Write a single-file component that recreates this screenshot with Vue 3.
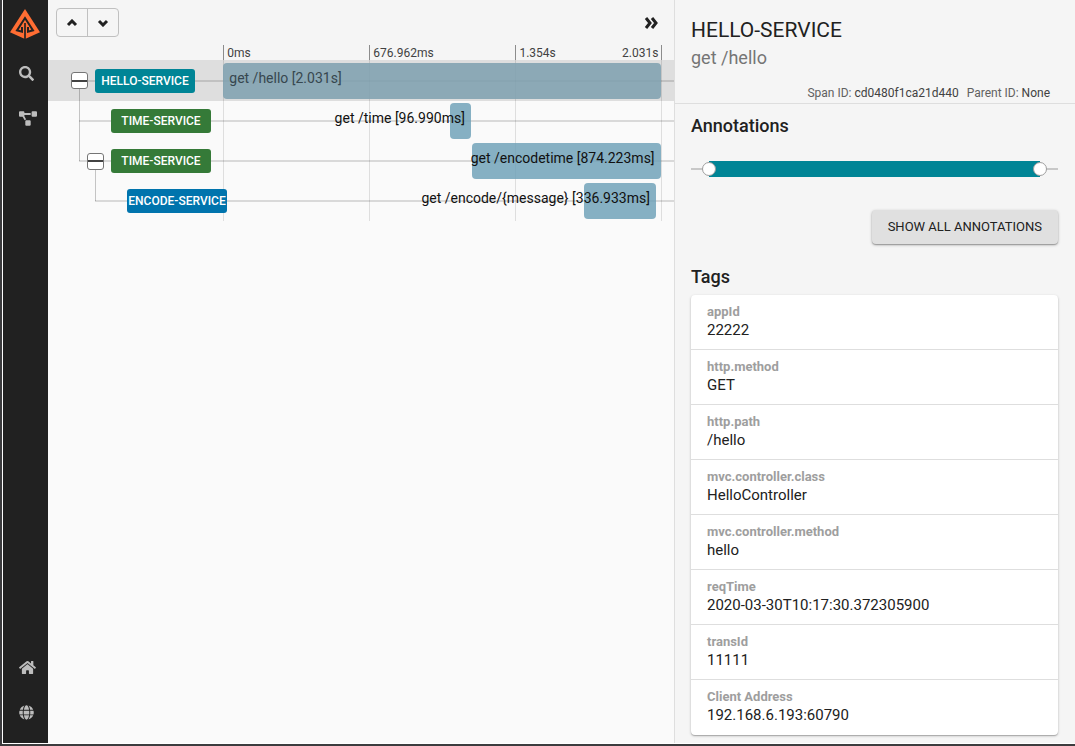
<script setup>
import { ref } from 'vue'

const ticks = ['0ms', '676.962ms', '1.354s']
const lastTick = '2.031s'

const spans = [
  { service: 'HELLO-SERVICE', tone: 'teal', depth: 0, toggle: true, start: 0, width: 100, label: 'get /hello [2.031s]', side: 'left' },
  { service: 'TIME-SERVICE', tone: 'green', depth: 1, toggle: false, start: 51.7, width: 4.8, label: 'get /time [96.990ms]', side: 'right' },
  { service: 'TIME-SERVICE', tone: 'green', depth: 1, toggle: true, start: 56.8, width: 43, label: 'get /encodetime [874.223ms]', side: 'right' },
  { service: 'ENCODE-SERVICE', tone: 'blue', depth: 2, toggle: false, start: 82.1, width: 16.6, label: 'get /encode/{message} [336.933ms]', side: 'right' },
]

// Vertical connectors of the tree: nesting level, first row and number of rows spanned.
const connectors = [
  { depth: 0, row: 0, rows: 2 },
  { depth: 1, row: 2, rows: 1 },
]

const tags = [
  ['appId', '22222'],
  ['http.method', 'GET'],
  ['http.path', '/hello'],
  ['mvc.controller.class', 'HelloController'],
  ['mvc.controller.method', 'hello'],
  ['reqTime', '2020-03-30T10:17:30.372305900'],
  ['transId', '11111'],
  ['Client Address', '192.168.6.193:60790'],
]

const selected = ref(0)
const from = ref(5)
const to = ref(95)
</script>

<template>
  <div class="frame">
    <nav class="sidebar" aria-label="Main">
      <a class="logo" href="#" aria-label="Zipkin">
        <svg viewBox="0 0 90 90" width="30" height="30">
          <path fill="#ff6d33" d="M45 0 90 70 45 90 0 70Z" />
          <path fill="none" stroke="#212121" stroke-width="6" d="M36 54V68L21 64 45 27 69 64 54 68V54" />
          <path stroke="#212121" stroke-width="5" d="M45 42V90" />
        </svg>
      </a>
      <a class="nav-link" href="#" aria-label="Discover">
        <svg viewBox="0 0 512 512" width="15" height="15"><path d="M505 442.700 405.300 343c-4.500-4.500-10.600-7-17-7H372c27.600-35.300 44-79.700 44-128C416 93.100 322.900 0 208 0S0 93.100 0 208s93.100 208 208 208c48.300 0 92.700-16.400 128-44v16.300c0 6.400 2.500 12.500 7 17l99.700 99.700c9.400 9.400 24.600 9.400 33.900 0l28.300-28.300c9.400-9.400 9.400-24.600.1-34zM208 336c-70.700 0-128-57.200-128-128 0-70.700 57.200-128 128-128 70.700 0 128 57.200 128 128 0 70.700-57.200 128-128 128z" /></svg>
      </a>
      <a class="nav-link" href="#" aria-label="Dependencies">
        <svg viewBox="0 0 640 512" width="18" height="15"><path d="M384 320H256c-17.700 0-32 14.300-32 32v128c0 17.700 14.300 32 32 32h128c17.700 0 32-14.300 32-32V352c0-17.700-14.300-32-32-32zM192 32c0-17.700-14.300-32-32-32H32C14.300 0 0 14.300 0 32v128c0 17.700 14.300 32 32 32h95.700l73.200 128c11.100-19 31.400-32 55.100-32h.3L192 175.400V128h224V64H192V32zM608 0H480c-17.700 0-32 14.300-32 32v128c0 17.700 14.300 32 32 32h128c17.700 0 32-14.300 32-32V32c0-17.700-14.300-32-32-32z" /></svg>
      </a>
      <a class="nav-link push" href="#" aria-label="Home">
        <svg viewBox="0 0 576 512" width="17" height="15"><path d="M280.400 148.300 96 300.100V464a16 16 0 0 0 16 16l112.100-.3a16 16 0 0 0 15.900-16V368a16 16 0 0 1 16-16h64a16 16 0 0 1 16 16v95.600a16 16 0 0 0 16 16.100L464 480a16 16 0 0 0 16-16V300L295.700 148.300a12.200 12.200 0 0 0-15.300 0zM571.600 251.500 488 182.600V44a12 12 0 0 0-12-12h-56a12 12 0 0 0-12 12v72.600L318.500 43a48 48 0 0 0-61 0L4.300 251.500a12 12 0 0 0-1.600 16.900l25.500 31a12 12 0 0 0 16.900 1.600l235.200-193.700a12.200 12.200 0 0 1 15.300 0L530.900 301a12 12 0 0 0 16.900-1.600l25.500-31a12 12 0 0 0-1.700-16.900z" /></svg>
      </a>
      <a class="nav-link" href="#" aria-label="Language">
        <svg viewBox="0 0 496 512" width="15" height="15"><path d="M336.500 160C322 70.700 287.800 8 248 8s-74 62.700-88.500 152h177zM152 256c0 22.200 1.200 43.500 3.300 64h185.300c2.100-20.500 3.300-41.800 3.300-64s-1.200-43.500-3.300-64H155.300c-2.100 20.500-3.300 41.800-3.300 64zm324.700-96c-28.600-67.900-86.500-120.400-158-141.600 24.400 33.800 41.200 84.700 50 141.600h108zM177.200 18.400C105.800 39.600 47.800 92.100 19.300 160h108c8.700-56.900 25.500-107.800 49.900-141.600zM487.400 192H372.700c2.100 21 3.300 42.500 3.300 64s-1.200 43-3.300 64h114.600c5.500-20.500 8.600-41.800 8.600-64s-3.100-43.500-8.500-64zM120 256c0-21.500 1.200-43 3.300-64H8.600C3.200 212.500 0 233.800 0 256s3.200 43.500 8.600 64h114.600c-2-21-3.200-42.500-3.200-64zm39.500 96c14.500 89.300 48.700 152 88.500 152s74-62.700 88.500-152h-177zm159.300 141.600c71.400-21.200 129.400-73.700 158-141.600h-108c-8.800 56.900-25.600 107.800-50 141.600zM19.300 352c28.600 67.900 86.500 120.400 158 141.600-24.400-33.800-41.200-84.700-50-141.600h-108z" /></svg>
      </a>
    </nav>

    <main class="trace">
      <header class="trace-head">
        <div class="toolbar">
          <div class="button-group">
            <button type="button" aria-label="Previous span">
              <svg viewBox="0 0 12 8" width="12" height="8"><path d="M2 6l4-4 4 4" /></svg>
            </button>
            <button type="button" aria-label="Next span">
              <svg viewBox="0 0 12 8" width="12" height="8"><path d="M2 2l4 4 4-4" /></svg>
            </button>
          </div>
          <button class="collapse" type="button" aria-label="Hide details">
            <svg viewBox="0 0 14 12" width="14" height="12"><path d="M2 1l4 5-4 5M8 1l4 5-4 5" /></svg>
          </button>
        </div>
        <div class="columns">
          <div class="ticks">
            <span v-for="(tick, i) in ticks" :key="tick" class="tick" :class="{ last: i === 2 }">
              <span>{{ tick }}</span>
              <span v-if="i === 2">{{ lastTick }}</span>
            </span>
          </div>
        </div>
      </header>

      <section class="timeline" aria-label="Timeline">
        <div class="columns gridlines" aria-hidden="true">
          <div class="lines"><i></i><i></i><i></i></div>
        </div>
        <i
          v-for="c in connectors"
          :key="c.depth"
          class="connector"
          :style="{ left: 31 + c.depth * 16 + 'px', top: 21 + c.row * 40 + 'px', height: c.rows * 40 + 'px' }"
        ></i>
        <div
          v-for="(span, i) in spans"
          :key="i"
          class="row"
          :class="{ selected: selected === i }"
          @click="selected = i"
        >
          <i class="row-line" :style="{ left: 31 + Math.max(span.depth - 1, 0) * 16 + 'px' }"></i>
          <div class="service" :style="{ paddingLeft: 23 + span.depth * 16 + 'px' }">
            <span class="slot">
              <button v-if="span.toggle" class="toggle" type="button" aria-label="Collapse children"></button>
            </span>
            <span class="badge" :class="span.tone">{{ span.service }}</span>
          </div>
          <div class="lane">
            <div class="bar" :class="span.side" :style="{ left: span.start + '%', width: span.width + '%' }">
              <span>{{ span.label }}</span>
            </div>
          </div>
        </div>
      </section>
    </main>

    <aside class="detail">
      <header class="detail-head">
        <h1>HELLO-SERVICE</h1>
        <p class="operation">get /hello</p>
        <p class="ids">
          <span>Span ID: <b>cd0480f1ca21d440</b></span>
          <span>Parent ID: <b>None</b></span>
        </p>
      </header>
      <div class="detail-body">
        <h2>Annotations</h2>
        <div class="range">
          <i class="range-fill" :style="{ left: from + '%', right: 100 - to + '%' }"></i>
          <input v-model.number="from" type="range" min="0" max="100" aria-label="Range start" />
          <input v-model.number="to" type="range" min="0" max="100" aria-label="Range end" />
        </div>
        <button class="show-all" type="button">SHOW ALL ANNOTATIONS</button>
        <h2>Tags</h2>
        <dl class="tags">
          <div v-for="[name, value] in tags" :key="name">
            <dt>{{ name }}</dt>
            <dd>{{ value }}</dd>
          </div>
        </dl>
      </div>
    </aside>
  </div>
</template>

<style>
body {
  background: #3c3c3e;
}
</style>

<style scoped>
* {
  box-sizing: border-box;
}
.frame {
  display: grid;
  grid-template-columns: 45px minmax(0, 1fr) 401px;
  min-height: calc(100vh - 2px);
  margin: 0 0 2px 2px;
  border: solid #fff;
  border-width: 0 0 1px 1px;
  background: #fafafa;
  color: #212121;
  font-family: Roboto, "Liberation Sans", sans-serif;
}
button {
  font: inherit;
  color: inherit;
  cursor: pointer;
}
h1, h2, p, dl, dd {
  margin: 0;
}

.sidebar {
  display: flex;
  flex-direction: column;
  gap: 15px;
  padding: 9px 0 16px;
  background: #212121;
}
.logo {
  height: 30px;
  margin-bottom: 4px;
  padding-left: 7px;
}
.logo svg {
  display: block;
}
.nav-link {
  display: flex;
  align-items: center;
  height: 30px;
  padding-left: 16px;
  fill: #bdbdbd;
}
.push {
  margin-top: auto;
}

.trace-head {
  background: #f5f5f5;
}
.toolbar {
  display: flex;
  align-items: center;
  justify-content: space-between;
  height: 45px;
  padding: 0 14px 0 8px;
}
.toolbar path {
  fill: none;
  stroke: #212121;
  stroke-width: 3;
}
.button-group {
  display: flex;
  border: 1px solid #c0c0c0;
  border-radius: 4px;
}
.button-group button {
  display: grid;
  place-items: center;
  width: 30px;
  height: 27px;
  padding: 0;
  border: 0;
  background: none;
}
.button-group button:first-child {
  width: 31px;
  border-right: 1px solid #c0c0c0;
}
.collapse {
  display: grid;
  place-items: center;
  width: 18px;
  height: 18px;
  padding: 0;
  border: 0;
  background: none;
}

.columns,
.row {
  display: grid;
  grid-template-columns: 28fr 70fr 2fr;
}
.ticks,
.lines {
  grid-column: 2;
  display: grid;
  grid-template-columns: repeat(3, 1fr);
  margin-right: -1px;
  border-right: 1px solid #8c8c8c;
}
.tick {
  height: 15px;
  padding: 0 3px;
  border-left: 1px solid #8c8c8c;
  color: #424242;
  font-size: 12px;
  line-height: 16px;
}
.last {
  display: flex;
  justify-content: space-between;
}

.timeline {
  position: relative;
}
.gridlines {
  position: absolute;
  inset: 0;
}
.lines,
.lines i {
  border-color: #dedede;
}
.lines i {
  border-left: 1px solid #dedede;
}
.connector {
  position: absolute;
  width: 1px;
  background: #c4c4c4;
}
.row {
  position: relative;
  height: 40px;
}
.row.selected {
  height: 41px;
  background: rgba(0, 0, 0, 0.11);
}
.row-line {
  position: absolute;
  top: 19px;
  right: 0;
  height: 2px;
  background: rgba(0, 0, 0, 0.13);
}
.selected .row-line {
  top: 20px;
}
.service {
  position: relative;
  display: flex;
  align-items: center;
  gap: 7px;
  white-space: nowrap;
}
.slot {
  display: flex;
  flex: 0 0 17px;
}
.toggle {
  display: grid;
  place-items: center;
  width: 17px;
  height: 17px;
  padding: 0;
  border: 1px solid #757575;
  border-radius: 3px;
  background: #fff;
}
.toggle::before {
  content: "";
  width: 15px;
  height: 2px;
  background: #424242;
}
.badge {
  display: flex;
  flex: 0 0 100px;
  justify-content: center;
  border-radius: 3px;
  color: #fff;
  font-size: 12px;
  font-weight: 500;
  line-height: 24px;
}
.teal {
  background: #008596;
}
.green {
  background: #357a38;
}
.blue {
  background: #0074ad;
}
.lane {
  position: relative;
}
.bar {
  position: absolute;
  top: 2px;
  display: flex;
  height: 36px;
  padding: 0 6px;
  border-radius: 4px;
  background: rgba(108, 160, 183, 0.82);
  color: #111;
  font-size: 14px;
  line-height: 30px;
  white-space: nowrap;
}
.selected .bar {
  top: 3px;
  background: rgba(126, 160, 175, 0.85);
  color: #37474f;
}
.bar.right {
  justify-content: flex-end;
}

.detail {
  border-left: 1px solid #dedede;
  background: #f5f5f5;
}
.detail-head {
  padding: 18px 16px 1px;
  border-bottom: 1px solid #dedede;
}
h1 {
  font-size: 21px;
  font-weight: 400;
  line-height: 24px;
}
.operation {
  color: #757575;
  font-size: 18px;
  line-height: 32px;
}
.ids {
  display: flex;
  justify-content: flex-end;
  gap: 8px;
  padding: 10px 9px 0 0;
  color: #616161;
  font-size: 12px;
  line-height: 18px;
}
.ids b {
  color: #424242;
  font-weight: 400;
}
.detail-body {
  display: flex;
  flex-direction: column;
  padding: 8px 17px 8px 16px;
}
h2 {
  font-size: 18px;
  font-weight: 500;
  line-height: 28px;
}
.range {
  position: relative;
  height: 16px;
  margin: 21px 0 33px;
}
.range::before {
  content: "";
  position: absolute;
  inset: 7px 0;
  background: #c8c8c8;
}
.range-fill {
  position: absolute;
  top: 0;
  bottom: 0;
  background: #008596;
}
.range input {
  position: absolute;
  top: 0;
  left: -7px;
  width: calc(100% + 14px);
  height: 16px;
  margin: 0;
  appearance: none;
  background: none;
  pointer-events: none;
}
.range input::-webkit-slider-thumb {
  appearance: none;
  width: 14px;
  height: 14px;
  border: 1px solid #9e9e9e;
  border-radius: 50%;
  background: #fff;
  pointer-events: auto;
}
.show-all {
  align-self: flex-end;
  height: 34px;
  margin-bottom: 19px;
  padding: 0 16px 2px;
  border: 0;
  border-radius: 4px;
  background: #e0e0e0;
  box-shadow: 0 1px 3px rgba(0, 0, 0, 0.3), 0 1px 1px rgba(0, 0, 0, 0.2);
  font-size: 13px;
}
.tags {
  margin-top: 4px;
  border-radius: 4px;
  background: #fff;
  box-shadow: 0 1px 3px rgba(0, 0, 0, 0.2), 0 1px 1px rgba(0, 0, 0, 0.2);
}
.tags div {
  height: 55px;
  padding: 8px 16px 0;
  border-bottom: 1px solid #dedede;
}
.tags div:last-child {
  border-bottom: 0;
}
dt {
  color: #9e9e9e;
  font-size: 13px;
  font-weight: 700;
  line-height: 17px;
}
dd {
  font-size: 15px;
  line-height: 20px;
}
</style>
